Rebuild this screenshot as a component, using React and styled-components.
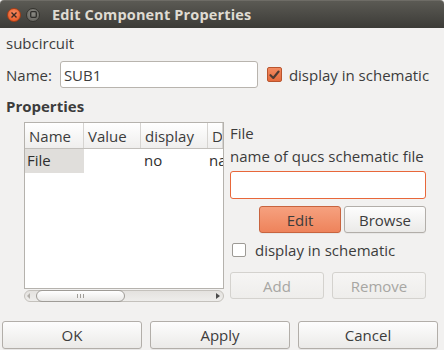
import React from "react";
import styled, { createGlobalStyle } from "styled-components";

const GlobalStyle = createGlobalStyle`
  html, body {
    margin: 0;
    padding: 0;
    background: #f2f1f0;
  }
  * {
    box-sizing: border-box;
  }
`;

const FONT = `"Open Sans", "Liberation Sans", sans-serif`;

const Window = styled.div`
  width: 444px;
  height: 350px;
  background: #f2f1f0;
  display: flex;
  flex-direction: column;
  overflow: hidden;
  font-family: ${FONT};
  font-size: 15px;
  color: #3c3c3c;
`;

const TitleBar = styled.div`
  height: 28px;
  flex: none;
  display: flex;
  align-items: center;
  padding-left: 7px;
  background: linear-gradient(#5b5a54, #3c3b37);
  border-top: 1px solid #6e6c66;
  border-radius: 4px 4px 0 0;
`;

const WinButton = styled.div`
  width: 14px;
  height: 14px;
  border-radius: 50%;
  margin-right: 5px;
  display: flex;
  align-items: center;
  justify-content: center;
  background: ${(p) =>
    p.$close
      ? "radial-gradient(circle at 50% 35%, #f78b62, #e6521c)"
      : "radial-gradient(circle at 50% 35%, #8a8983, #5f5e59)"};
  border: 1px solid ${(p) => (p.$close ? "#a83d14" : "#35342f")};
`;

const Title = styled.div`
  margin-left: 7px;
  font-weight: bold;
  font-size: 14.5px;
  color: #dfdbd2;
  letter-spacing: 0.15px;
`;

const Body = styled.div`
  flex: 1;
  display: flex;
  flex-direction: column;
  padding: 0 6px;
`;

const Label = styled.div`
  height: 20px;
  line-height: 20px;
  white-space: nowrap;
  margin-top: ${(p) => p.$mt || 0}px;
  font-weight: ${(p) => (p.$bold ? "bold" : "normal")};
`;

const NameRow = styled.div`
  margin-top: 8px;
  height: 27px;
  display: flex;
  align-items: center;
`;

const TextInput = styled.div`
  width: ${(p) => p.$w}px;
  height: ${(p) => p.$h}px;
  margin-left: ${(p) => p.$ml || 0}px;
  margin-top: ${(p) => p.$mt || 0}px;
  background: #fff;
  border: 1px solid ${(p) => (p.$focus ? "#e8673a" : "#b8b4ae")};
  border-radius: 3px;
  display: flex;
  align-items: center;
  padding-left: 3px;
  color: #3c3c3c;
`;

const CheckRow = styled.div`
  display: flex;
  align-items: center;
  margin-left: ${(p) => p.$ml || 0}px;
  margin-top: ${(p) => p.$mt || 0}px;
  height: ${(p) => p.$h || 20}px;
  white-space: nowrap;
`;

const Box = styled.div`
  width: ${(p) => (p.$checked ? 15 : 14)}px;
  height: ${(p) => (p.$checked ? 15 : 14)}px;
  margin-right: ${(p) => (p.$checked ? 7 : 9)}px;
  border-radius: 2px;
  display: flex;
  align-items: center;
  justify-content: center;
  background: ${(p) =>
    p.$checked ? "linear-gradient(#f28a60, #e46a3c)" : "#fff"};
  border: 1px solid ${(p) => (p.$checked ? "#b9552e" : "#9d9a95")};
`;

const Main = styled.div`
  margin-top: 6px;
  display: flex;
  margin-left: 18px;
`;

const TableFrame = styled.div`
  width: 200px;
  display: flex;
  flex-direction: column;
`;

const Table = styled.div`
  height: 167px;
  background: #fff;
  border: 1px solid #b5b2ad;
  overflow: hidden;
`;

const HeaderRow = styled.div`
  display: flex;
  height: 26px;
  background: linear-gradient(#ffffff, #efeeed);
  border-bottom: 1px solid #c2bfbb;
`;

const HeadCell = styled.div`
  flex: none;
  width: ${(p) => p.$w}px;
  padding-left: 4px;
  line-height: 26px;
  white-space: nowrap;
  overflow: hidden;
  border-right: 1px solid #d6d4d1;
`;

const DataRow = styled.div`
  display: flex;
  height: 24px;
`;

const Cell = styled.div`
  flex: none;
  width: ${(p) => p.$w}px;
  padding-left: ${(p) => p.$pl || 2}px;
  line-height: 22px;
  white-space: nowrap;
  overflow: hidden;
  background: ${(p) => (p.$sel ? "#e0dedb" : "transparent")};
  color: #2e2e2e;
`;

const ScrollBar = styled.div`
  margin-top: 1px;
  height: 12px;
  border: 1px solid #c4c1bc;
  border-radius: 6px;
  background: linear-gradient(#e4e2df, #eeedeb);
  display: flex;
  align-items: center;
  padding: 0 3px 0 2px;
`;

const Arrow = styled.div`
  width: 0;
  height: 0;
  border-top: 3px solid transparent;
  border-bottom: 3px solid transparent;
  ${(p) =>
    p.$left
      ? "border-right: 3px solid #b3b0ab;"
      : "border-left: 4px solid #4a4a4a; margin-left: auto;"}
`;

const Handle = styled.div`
  margin-left: 6px;
  width: 89px;
  height: 12px;
  border: 1px solid #9f9c97;
  border-radius: 6px;
  background: linear-gradient(#ffffff, #e9e8e6);
  display: flex;
  align-items: center;
  justify-content: center;
  gap: 2px;
`;

const Grip = styled.span`
  width: 1px;
  height: 4px;
  background: #a09d98;
`;

const Side = styled.div`
  width: 196px;
  margin-left: 6px;
  display: flex;
  flex-direction: column;
`;

const ButtonRow = styled.div`
  display: flex;
  justify-content: ${(p) => p.$justify || "flex-start"};
  gap: ${(p) => p.$gap}px;
  margin-top: ${(p) => p.$mt || 0}px;
`;

const Button = styled.div`
  width: ${(p) => p.$w}px;
  height: ${(p) => p.$h || 27}px;
  border-radius: 3px;
  display: flex;
  align-items: center;
  justify-content: center;
  white-space: nowrap;
  color: ${(p) => (p.$disabled ? "#a7a6a3" : "#3c3c3c")};
  border: 1px solid
    ${(p) => (p.$primary ? "#c8643f" : p.$disabled ? "#d4d2ce" : "#b2aea9")};
  background: ${(p) =>
    p.$primary
      ? "linear-gradient(#f6a17f, #ee835b)"
      : p.$disabled
      ? "linear-gradient(#f6f5f4, #eeedeb)"
      : "linear-gradient(#fdfdfd, #ebeae8)"};
  box-shadow: ${(p) =>
    p.$disabled ? "none" : "0 1px 0 rgba(0,0,0,0.04)"};
`;

const Footer = styled(ButtonRow)`
  margin-top: auto;
  margin-bottom: 1px;
  margin-left: -4px;
`;

const CheckMark = () => (
  <svg width="11" height="10" viewBox="0 0 11 10">
    <path
      d="M1.5 5.2 L4.3 8 L9.6 1.5"
      fill="none"
      stroke="#4e3a32"
      strokeWidth="2.1"
      strokeLinecap="round"
      strokeLinejoin="round"
    />
  </svg>
);

const columns = [
  { name: "Name", w: 59 },
  { name: "Value", w: 57 },
  { name: "display", w: 67 },
  { name: "Description", w: 15 },
];

export default function App() {
  return (
    <Window>
      <GlobalStyle />
      <TitleBar>
        <WinButton $close>
          <svg width="6" height="6" viewBox="0 0 6 6">
            <path d="M0.5 0.5 L5.5 5.5 M5.5 0.5 L0.5 5.5" stroke="#3b2a24" strokeWidth="1.4" />
          </svg>
        </WinButton>
        <WinButton>
          <svg width="7" height="7" viewBox="0 0 7 7">
            <rect x="0.7" y="0.7" width="5.6" height="5.6" rx="1" fill="none" stroke="#2f2e2b" strokeWidth="1.3" />
          </svg>
        </WinButton>
        <Title>Edit Component Properties</Title>
      </TitleBar>

      <Body>
        <Label $mt={5}>subcircuit</Label>

        <NameRow>
          <span>Name:</span>
          <TextInput $w={198} $h={27} $ml={8}>
            SUB1
          </TextInput>
          <CheckRow $ml={9} $h={27}>
            <Box $checked>
              <CheckMark />
            </Box>
            display in schematic
          </CheckRow>
        </NameRow>

        <Label $mt={8} $bold>
          Properties
        </Label>

        <Main>
          <TableFrame>
            <Table>
              <HeaderRow>
                {columns.map((c) => (
                  <HeadCell key={c.name} $w={c.w}>
                    {c.name}
                  </HeadCell>
                ))}
              </HeaderRow>
              <DataRow>
                <Cell $w={59} $sel>
                  File
                </Cell>
                <Cell $w={57}></Cell>
                <Cell $w={67} $pl={3}>
                  no
                </Cell>
                <Cell $w={15} $pl={1}>
                  name of qucs schematic file
                </Cell>
              </DataRow>
            </Table>
            <ScrollBar>
              <Arrow $left />
              <Handle>
                <Grip />
                <Grip />
                <Grip />
              </Handle>
              <Arrow />
            </ScrollBar>
          </TableFrame>

          <Side>
            <Label $mt={1}>File</Label>
            <Label $mt={3}>name of qucs schematic file</Label>
            <TextInput $w={196} $h={28} $mt={5} $focus />
            <ButtonRow $justify="flex-end" $gap={3} $mt={7}>
              <Button $w={82} $primary>
                Edit
              </Button>
              <Button $w={82}>Browse</Button>
            </ButtonRow>
            <CheckRow $ml={2} $mt={7}>
              <Box />
              display in schematic
            </CheckRow>
            <ButtonRow $gap={8} $mt={12}>
              <Button $w={94} $disabled>
                Add
              </Button>
              <Button $w={94} $disabled>
                Remove
              </Button>
            </ButtonRow>
          </Side>
        </Main>

        <Footer $gap={8}>
          <Button $w={141} $h={28}>
            OK
          </Button>
          <Button $w={141} $h={28}>
            Apply
          </Button>
          <Button $w={141} $h={28}>
            Cancel
          </Button>
        </Footer>
      </Body>
    </Window>
  );
}
